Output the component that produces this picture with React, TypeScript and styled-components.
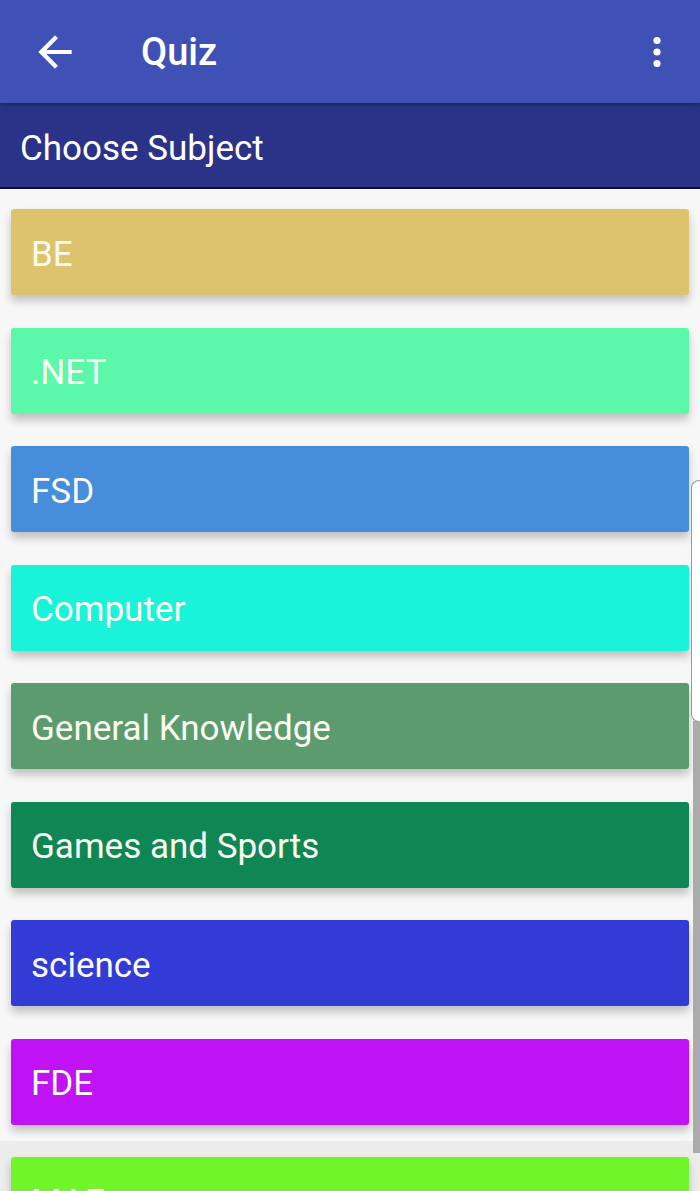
import React from 'react';
import styled, { createGlobalStyle } from 'styled-components';

const GlobalStyle = createGlobalStyle`
    html, body {
        margin: 0;
        padding: 0;
    }

    body {
        font-family: Roboto, 'Noto Sans', sans-serif;
        background: linear-gradient(to bottom, #f7f7f7 0, #f7f7f7 1141px, #ececec 1141px);
        overflow: hidden;
    }
`;

const Screen = styled.div`
    position: relative;
    width: 700px;
    height: 1191px;
    overflow: hidden;
`;

const AppBar = styled.header`
    position: relative;
    z-index: 2;
    display: flex;
    align-items: center;
    height: 103px;
    padding: 0 37px 0 30px;
    box-sizing: border-box;
    background: #3f51b5;
    box-shadow: 0 2px 4px rgba(0, 0, 0, 0.3);
`;

const IconButton = styled.button`
    display: flex;
    align-items: center;
    justify-content: center;
    padding: 0;
    border: none;
    background: none;
    color: #fff;
`;

const Title = styled.h1`
    flex: 1;
    margin: 0 0 0 61px;
    font-size: 38px;
    font-weight: 500;
    color: #fff;
`;

const SubHeader = styled.div`
    display: flex;
    align-items: center;
    height: 86px;
    padding: 6px 20px 0;
    box-sizing: border-box;
    background: #2a3388;
    border-bottom: 2px solid #0c0f2e;
    color: #fff;
    font-size: 35px;
`;

const List = styled.div`
    display: flex;
    flex-direction: column;
    gap: 32.5px;
    padding: 20px 11px 0;
`;

const Card = styled.div<{ $color: string }>`
    display: flex;
    align-items: center;
    flex-shrink: 0;
    height: 86px;
    padding: 4px 20px 0;
    box-sizing: border-box;
    border-radius: 3px;
    background: ${props => props.$color};
    box-shadow: 0 6px 8px rgba(0, 0, 0, 0.22);
    color: #fbfbf2;
    font-size: 35px;
`;

const EdgeHandle = styled.div`
    position: absolute;
    right: 0;
    top: 480px;
    width: 8px;
    height: 240px;
    background: #fff;
    border: 1px solid #9a9a9a;
    border-right: none;
    border-radius: 8px 0 0 8px;
`;

const EdgeTrack = styled.div`
    position: absolute;
    right: 0;
    top: 721px;
    width: 7px;
    height: 432px;
    background: #ababab;
`;

const subjects = [
    { name: 'BE', color: '#ddc46c' },
    { name: '.NET', color: '#5cf8aa' },
    { name: 'FSD', color: '#468ddc' },
    { name: 'Computer', color: '#19f3d9' },
    { name: 'General Knowledge', color: '#5b9b6d' },
    { name: 'Games and Sports', color: '#0f8755' },
    { name: 'science', color: '#323bd6' },
    { name: 'FDE', color: '#bf12f5' },
    { name: 'MAE', color: '#6ff52a' },
];

const App = () => (
    <>
        <GlobalStyle />
        <Screen>
            <AppBar>
                <IconButton aria-label="back">
                    <svg width="50" height="50" viewBox="0 0 24 24" fill="currentColor">
                        <path d="M20 11H7.83l5.59-5.59L12 4l-8 8 8 8 1.41-1.41L7.83 13H20v-2z" />
                    </svg>
                </IconButton>
                <Title>Quiz</Title>
                <IconButton aria-label="more">
                    <svg width="12" height="32" viewBox="0 0 12 32" fill="currentColor">
                        <circle cx="6" cy="4.5" r="3.6" />
                        <circle cx="6" cy="16" r="3.6" />
                        <circle cx="6" cy="27.5" r="3.6" />
                    </svg>
                </IconButton>
            </AppBar>
            <SubHeader>Choose Subject</SubHeader>
            <List>
                {subjects.map(subject => (
                    <Card key={subject.name} $color={subject.color}>
                        {subject.name}
                    </Card>
                ))}
            </List>
            <EdgeHandle />
            <EdgeTrack />
        </Screen>
    </>
);

export default App;
